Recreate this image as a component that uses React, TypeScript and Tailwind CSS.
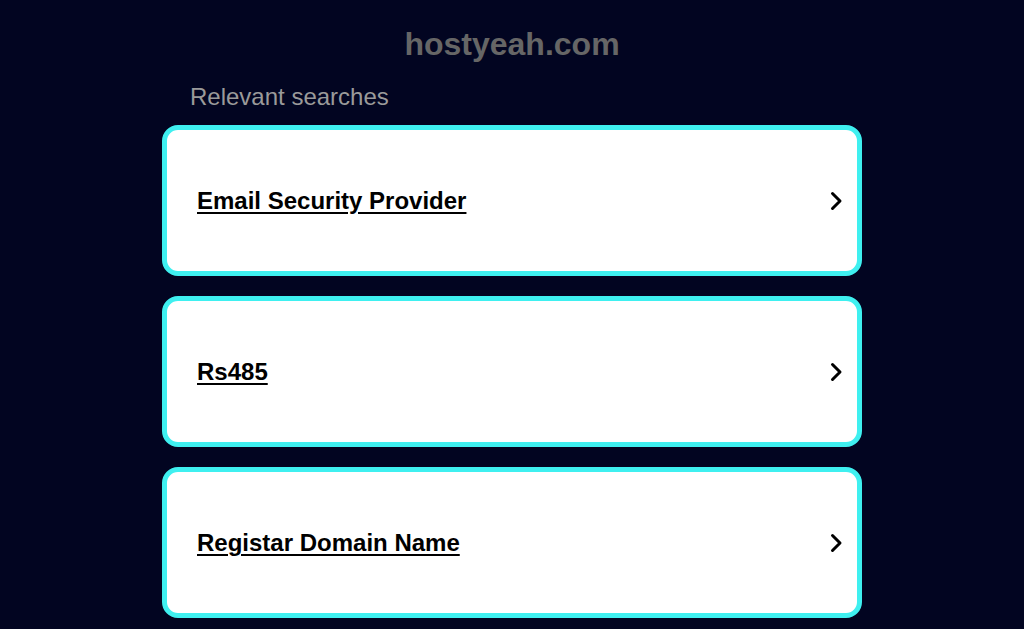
import React from 'react';

const searches = ['Email Security Provider', 'Rs485', 'Registar Domain Name'];

function Chevron() {
  return (
    <svg width="14" height="22" viewBox="0 0 14 22" fill="none" className="shrink-0">
      <path d="M3.5 3.5 L11 11 L3.5 18.5" stroke="#000" strokeWidth="3" strokeLinecap="round" strokeLinejoin="round" />
    </svg>
  );
}

export default function App() {
  return (
    <div className="min-h-[629px] bg-[#020521] font-['Liberation_Sans',Arial,sans-serif]">
      <div className="w-[700px] mx-auto pt-[26px]">
        <h1 className="text-center text-[32px] leading-[37px] font-bold text-[#666666]">hostyeah.com</h1>
        <p className="mt-[20px] ml-[28px] text-[24px] leading-[28px] text-[#9a9a9a]">Relevant searches</p>
        <div className="mt-[14px] flex flex-col gap-[20px]">
          {searches.map((s) => (
            <a
              key={s}
              href="#"
              className="h-[151px] flex items-center justify-between bg-white border-[5px] border-[#3ff0f0] rounded-[16px] pl-[30px] pr-[14px] pt-[1px]"
            >
              <span className="text-[24px] leading-[28px] font-bold text-black underline underline-offset-[3px] decoration-2">{s}</span>
              <Chevron />
            </a>
          ))}
        </div>
      </div>
    </div>
  );
}
